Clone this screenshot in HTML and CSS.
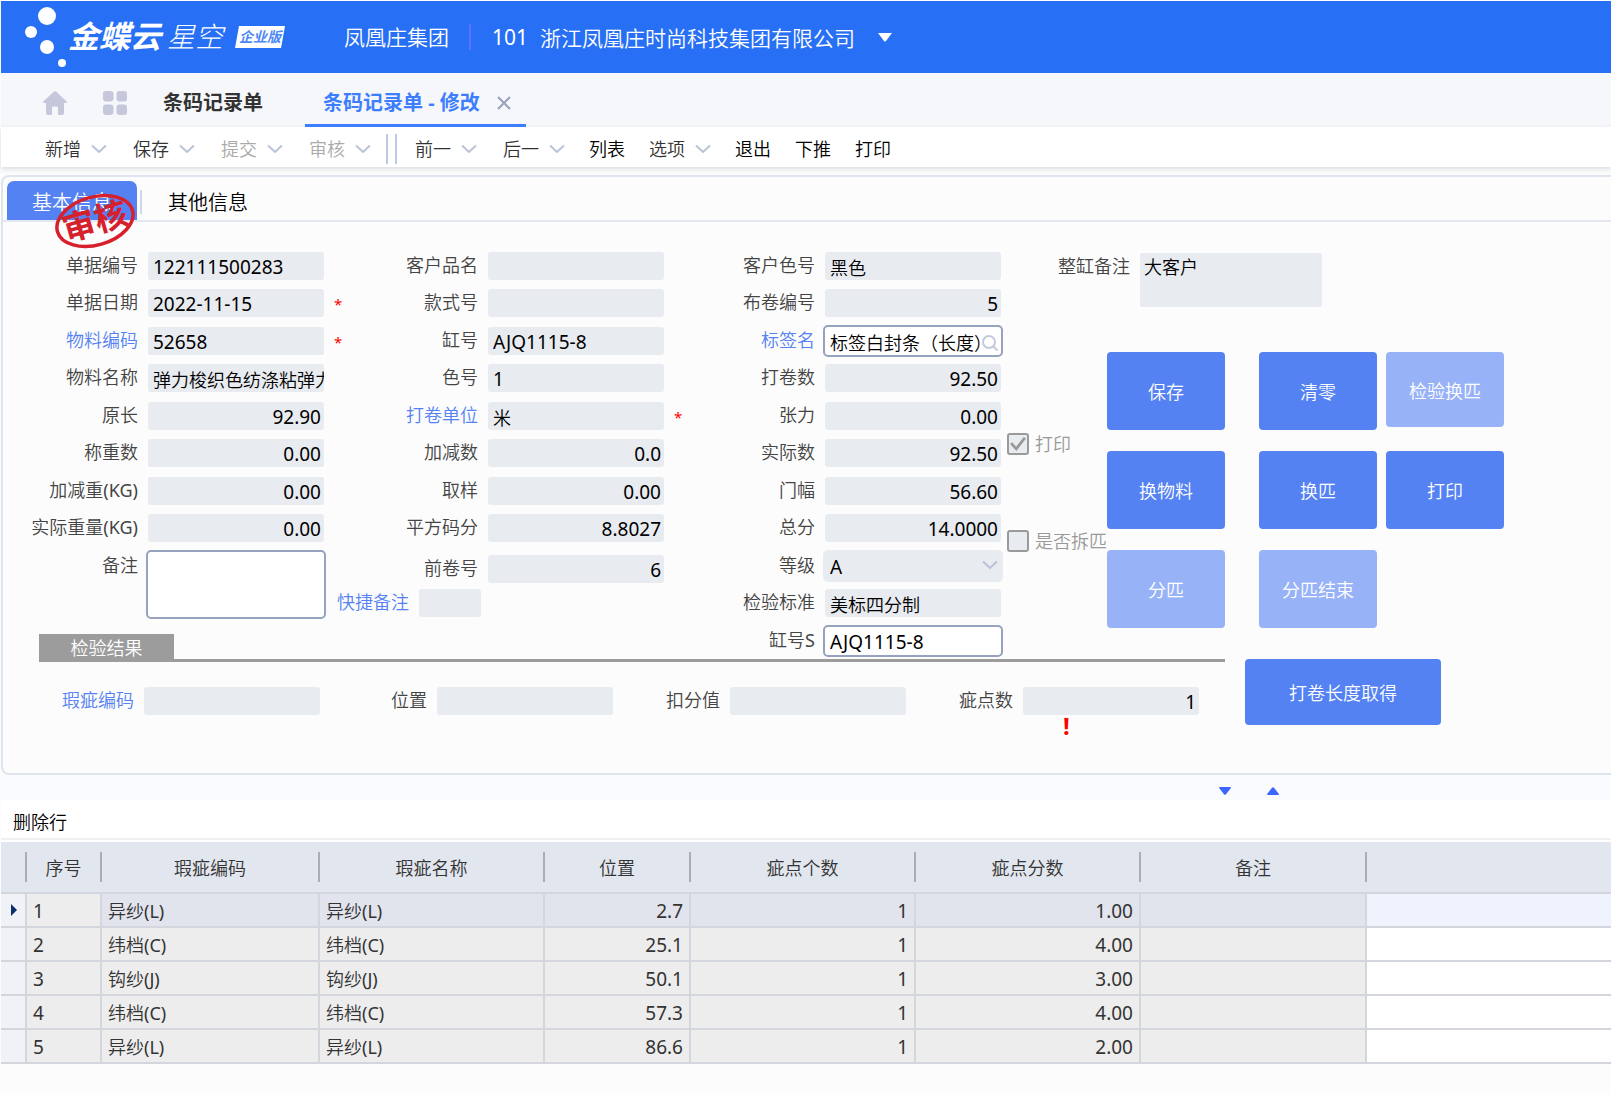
FILE: index.html
```html
<!DOCTYPE html>
<html lang="zh-CN">
<head>
<meta charset="utf-8">
<meta name="viewport" content="width=device-width, initial-scale=1">
<title>条码记录单 - 修改</title>
<link rel="stylesheet" href="styles.css">
</head>
<body>
<svg class="defs" aria-hidden="true">
  <symbol id="chevron" viewBox="0 0 16 10"><path d="M1 1.5 L8 8 L15 1.5" fill="none" stroke="#b9c2d6" stroke-width="2"/></symbol>
</svg>

<header class="topbar">
  <div class="logo">
    <svg class="logo-mark" viewBox="0 0 44 64" aria-hidden="true">
      <circle cx="23" cy="11" r="9"/><circle cx="7" cy="27" r="6"/><circle cx="23" cy="42" r="7"/><circle cx="38" cy="58" r="4"/>
    </svg>
    <span class="logo-name">金蝶云</span>
    <span class="logo-sub">星空</span>
    <span class="logo-badge">企业版</span>
  </div>
  <span class="org-group">凤凰庄集团</span>
  <button class="org-switch" type="button">
    <span class="org-code">101</span><span>浙江凤凰庄时尚科技集团有限公司</span>
    <svg width="14" height="9" viewBox="0 0 14 9" aria-hidden="true"><path d="M0 0H14L8 8Q7 9 6 8Z" fill="#fff"/></svg>
  </button>
</header>

<nav class="pagetabs">
  <button class="icon-btn" type="button" aria-label="首页"><svg width="24" height="24" viewBox="0 0 24 24"><path d="M11 .6Q12 -.2 13 .6L23.5 10.2Q24.4 12 22.6 12H21V22Q21 24 19 24H15V17Q15 15.5 13.500 15.500H10.500Q9 15.500 9 17V24H5Q3 24 3 22V12H1.400Q-.4 12 .5 10.200Z"/></svg></button>
  <button class="icon-btn" type="button" aria-label="应用"><svg width="24" height="24" viewBox="0 0 24 24"><rect width="10.500" height="10.500" rx="3"/><rect x="13.500" width="10.500" height="10.500" rx="3"/><rect y="13.500" width="10.500" height="10.500" rx="3"/><rect x="13.500" y="13.500" width="10.500" height="10.500" rx="3"/></svg></button>
  <a class="pagetab" href="#list">条码记录单</a>
  <div class="pagetab pagetab-active">
    <a href="#edit">条码记录单 - 修改</a>
    <button class="close" type="button" aria-label="关闭"><svg width="14" height="14" viewBox="0 0 14 14"><path d="M1 1L13 13M13 1L1 13" stroke="#9aa5bd" stroke-width="2.200" fill="none"/></svg></button>
  </div>
</nav>

<div class="toolbar">
  <div class="tool-group wide">
    <button class="tool" type="button">新增<svg><use href="#chevron"/></svg></button>
    <button class="tool" type="button">保存<svg><use href="#chevron"/></svg></button>
    <button class="tool" type="button" disabled>提交<svg><use href="#chevron"/></svg></button>
    <button class="tool" type="button" disabled>审核<svg><use href="#chevron"/></svg></button>
  </div>
  <span class="tool-sep"></span>
  <div class="tool-group wide">
    <button class="tool" type="button">前一<svg><use href="#chevron"/></svg></button>
    <button class="tool" type="button">后一<svg><use href="#chevron"/></svg></button>
  </div>
  <div class="tool-group">
    <button class="tool strong" type="button">列表</button>
    <button class="tool" type="button">选项<svg><use href="#chevron"/></svg></button>
    <button class="tool strong" type="button">退出</button>
    <button class="tool strong" type="button">下推</button>
    <button class="tool strong" type="button">打印</button>
  </div>
</div>

<main class="panel">
  <div class="formtabs">
    <button class="formtab formtab-active" type="button">基本信息</button>
    <span class="formtab-sep"></span>
    <button class="formtab" type="button">其他信息</button>
    <svg class="stamp" viewBox="0 0 84 60" role="img" aria-label="审核">
      <g transform="rotate(-16 42 30)" fill="#d6202c">
        <ellipse cx="42" cy="30" rx="39" ry="24" fill="none" stroke="#d6202c" stroke-width="3.500"/>
        <text x="42" y="42" text-anchor="middle" class="stamp-text">审核</text>
      </g>
    </svg>
  </div>

  <form class="form">
    <div class="upper">
      <div class="col col-a">
        <div class="field"><label for="a1">单据编号</label><input id="a1" value="122111500283" readonly></div>
        <div class="field"><label for="a2">单据日期</label><input id="a2" value="2022-11-15" readonly><span class="req">*</span></div>
        <div class="field link"><label for="a3">物料编码</label><input id="a3" value="52658" readonly><span class="req">*</span></div>
        <div class="field"><label for="a4">物料名称</label><input id="a4" class="zh" value="弹力梭织色纺涤粘弹力" readonly></div>
        <div class="field"><label for="a5">原长</label><input id="a5" class="num" value="92.90" readonly></div>
        <div class="field"><label for="a6">称重数</label><input id="a6" class="num" value="0.00" readonly></div>
        <div class="field"><label for="a7">加减重<span class="lat">(KG)</span></label><input id="a7" class="num" value="0.00" readonly></div>
        <div class="field"><label for="a8">实际重量<span class="lat">(KG)</span></label><input id="a8" class="num" value="0.00" readonly></div>
        <div class="field memo"><label for="a9">备注</label><textarea id="a9" class="editable"></textarea></div>
        <h2 class="section-title">检验结果</h2>
      </div>

      <div class="col col-b">
        <div class="field"><label for="b1">客户品名</label><input id="b1" readonly></div>
        <div class="field"><label for="b2">款式号</label><input id="b2" readonly></div>
        <div class="field"><label for="b3">缸号</label><input id="b3" value="AJQ1115-8" readonly></div>
        <div class="field"><label for="b4">色号</label><input id="b4" value="1" readonly></div>
        <div class="field link"><label for="b5">打卷单位</label><input id="b5" class="zh" value="米" readonly><span class="req">*</span></div>
        <div class="field"><label for="b6">加减数</label><input id="b6" class="num" value="0.0" readonly></div>
        <div class="field"><label for="b7">取样</label><input id="b7" class="num" value="0.00" readonly></div>
        <div class="field"><label for="b8">平方码分</label><input id="b8" class="num" value="8.8027" readonly></div>
        <div class="field last-roll"><label for="b9">前卷号</label><input id="b9" class="num" value="6" readonly></div>
        <div class="quick link"><label for="b10">快捷备注</label><input id="b10" readonly></div>
      </div>

      <div class="col col-c">
        <div class="field"><label for="c1">客户色号</label><input id="c1" class="zh" value="黑色" readonly></div>
        <div class="field"><label for="c2">布卷编号</label><input id="c2" class="num" value="5" readonly></div>
        <div class="field link"><label for="c3">标签名</label><div class="lookup"><input id="c3" class="zh editable" value="标签白封条（长度）"><svg width="16" height="16" viewBox="0 0 16 16" aria-hidden="true"><circle cx="7" cy="7" r="6" fill="none" stroke="#c3c9dc" stroke-width="2"/><path d="M11.500 11.500L15.500 15.500" stroke="#c3c9dc" stroke-width="2"/></svg></div></div>
        <div class="field"><label for="c4">打卷数</label><input id="c4" class="num" value="92.50" readonly></div>
        <div class="field"><label for="c5">张力</label><input id="c5" class="num" value="0.00" readonly></div>
        <div class="field"><label for="c6">实际数</label><input id="c6" class="num" value="92.50" readonly></div>
        <div class="field"><label for="c7">门幅</label><input id="c7" class="num" value="56.60" readonly></div>
        <div class="field"><label for="c8">总分</label><input id="c8" class="num" value="14.0000" readonly></div>
        <div class="field"><label for="c9">等级</label><div class="lookup"><select id="c9" disabled><option>A</option></select><svg width="16" height="10" aria-hidden="true"><use href="#chevron"/></svg></div></div>
        <div class="field"><label for="c10">检验标准</label><input id="c10" class="zh" value="美标四分制" readonly></div>
        <div class="field"><label for="c11">缸号<span class="lat">S</span></label><input id="c11" class="editable" value="AJQ1115-8"></div>
      </div>

      <div class="side">
        <div class="vat-note"><label for="d1">整缸备注</label><textarea id="d1" class="zh" readonly>大客户</textarea></div>
        <div class="side-row">
          <div class="checks">
            <label class="check"><input type="checkbox" checked disabled>打印</label>
            <label class="check"><input type="checkbox" disabled>是否拆匹</label>
          </div>
          <div class="actions">
            <button class="action" type="button">保存</button>
            <button class="action" type="button">清零</button>
            <button class="action action-short" type="button" disabled>检验换匹</button>
            <button class="action" type="button">换物料</button>
            <button class="action" type="button">换匹</button>
            <button class="action" type="button">打印</button>
            <button class="action" type="button" disabled>分匹</button>
            <button class="action" type="button" disabled>分匹结束</button>
          </div>
        </div>
      </div>
    </div>

    <div class="lower">
      <div class="results">
        <div class="result link"><label for="r1">瑕疵编码</label><input id="r1" readonly></div>
        <div class="result"><label for="r2">位置</label><input id="r2" readonly></div>
        <div class="result"><label for="r3">扣分值</label><input id="r3" readonly></div>
        <div class="result"><label for="r4">疵点数</label><input id="r4" class="num" value="1" readonly><span class="warn">!</span></div>
      </div>
      <button class="action action-wide" type="button">打卷长度取得</button>
    </div>
  </form>
</main>

<div class="splitter">
  <button type="button" aria-label="向下"><svg width="12" height="8" viewBox="0 0 12 8"><path d="M1 0H11Q12.500 0 11.500 1.500L7 7.200Q6 8.200 5 7.200L.5 1.500Q-.5 0 1 0Z"/></svg></button>
  <button type="button" aria-label="向上"><svg width="12" height="8" viewBox="0 0 12 8"><path d="M1 8H11Q12.500 8 11.500 6.500L7 .8Q6 -.2 5 .8L.5 6.500Q-.5 8 1 8Z"/></svg></button>
</div>

<section class="entries">
  <div class="entrybar"><button type="button">删除行</button></div>
  <table class="grid">
    <colgroup><col class="w-mark"><col class="w-seq"><col class="w-code"><col class="w-std"><col class="w-pos"><col class="w-std"><col class="w-std"><col class="w-note"><col></colgroup>
    <thead>
      <tr><th></th><th>序号</th><th>瑕疵编码</th><th>瑕疵名称</th><th>位置</th><th>疵点个数</th><th>疵点分数</th><th>备注</th><th></th></tr>
    </thead>
    <tbody>
      <tr class="selected"><td><svg width="6" height="12" viewBox="0 0 6 12" aria-hidden="true"><path d="M0 0L6 6L0 12Z" fill="#0b2f6b"/></svg></td><td class="n">1</td><td>异纱<span class="lat">(L)</span></td><td>异纱<span class="lat">(L)</span></td><td class="n r">2.7</td><td class="n r">1</td><td class="n r">1.00</td><td></td><td></td></tr>
      <tr><td></td><td class="n">2</td><td>纬档<span class="lat">(C)</span></td><td>纬档<span class="lat">(C)</span></td><td class="n r">25.1</td><td class="n r">1</td><td class="n r">4.00</td><td></td><td></td></tr>
      <tr><td></td><td class="n">3</td><td>钩纱<span class="lat">(J)</span></td><td>钩纱<span class="lat">(J)</span></td><td class="n r">50.1</td><td class="n r">1</td><td class="n r">3.00</td><td></td><td></td></tr>
      <tr><td></td><td class="n">4</td><td>纬档<span class="lat">(C)</span></td><td>纬档<span class="lat">(C)</span></td><td class="n r">57.3</td><td class="n r">1</td><td class="n r">4.00</td><td></td><td></td></tr>
      <tr><td></td><td class="n">5</td><td>异纱<span class="lat">(L)</span></td><td>异纱<span class="lat">(L)</span></td><td class="n r">86.6</td><td class="n r">1</td><td class="n r">2.00</td><td></td><td></td></tr>
    </tbody>
  </table>
</section>
</body>
</html>
```
FILE: styles.css
```css
* { box-sizing: border-box; }

body {
  margin: 0;
  padding: 1px 0 0 1px;
  min-height: 100vh;
  background: #fcfcfc;
  color: #444;
  font-family: "Noto Sans", "Noto Sans CJK SC", sans-serif;
  font-size: 18px;
  font-weight: 350;
  overflow-x: hidden;
}

button, input, select, textarea { font: inherit; color: inherit; }
button { padding: 0; border: 0; background: none; cursor: pointer; }
a { color: inherit; text-decoration: none; }
svg { display: block; flex: none; }
.defs { position: absolute; width: 0; height: 0; }
.lat { font-weight: 400; }

/* Top bar */
.topbar {
  display: flex;
  align-items: center;
  height: 72px;
  background: #276ff5;
  color: #fff;
  font-size: 21px;
  white-space: nowrap;
}
.logo { display: flex; align-items: center; width: 320px; margin-left: 23px; }
.logo-mark { width: 44px; height: 64px; fill: #fff; }
.logo-name { font-size: 31px; font-weight: 700; font-style: italic; line-height: 72px; padding-bottom: 3px; }
.logo-sub { margin-left: 6px; padding-bottom: 3px; font-size: 28px; font-weight: 300; font-style: italic; line-height: 72px; }
.logo-badge {
  width: 50px;
  margin-left: 12px;
  background: #fff;
  clip-path: polygon(8% 0, 100% 0, 92% 100%, 0 100%);
  color: #4d88f7;
  font-size: 14px;
  font-weight: 700;
  font-style: italic;
  line-height: 22px;
  text-align: center;
}
.org-group { padding-right: 20px; border-right: 2px solid #5f70fa; line-height: 26px; }
.org-switch { display: flex; align-items: center; gap: 12px; margin-left: 21px; }
.org-switch svg { margin-left: 11px; }
.org-code { font-weight: 400; }

/* Page tabs */
.pagetabs {
  display: flex;
  align-items: center;
  height: 54px;
  padding-left: 42px;
  background: #f6f7fb;
  font-size: 20px;
  font-weight: 700;
  white-space: nowrap;
}
.icon-btn { margin-right: 36px; padding-top: 6px; fill: #c5c8da; }
.pagetab { height: 54px; padding-top: 6px; color: #333; line-height: 48px; }
.pagetab-active {
  display: flex;
  align-items: center;
  justify-content: space-between;
  width: 221px;
  margin-left: 42px;
  padding: 9px 15px 0 18px;
  border-bottom: 3px solid #3d7eff;
  color: #3d7eff;
  line-height: 42px;
}

/* Toolbar */
.toolbar {
  display: flex;
  align-items: center;
  gap: 24px;
  height: 40px;
  padding: 3px 0 0 44px;
  background: #fff;
  box-shadow: 0 2px 5px rgba(60, 70, 90, .18);
  white-space: nowrap;
}
.tool-group { display: flex; gap: 24px; }
.tool-group.wide { gap: 26px; }
.tool { display: flex; align-items: center; gap: 10px; color: #333; line-height: 34px; }
.tool svg { width: 16px; height: 10px; }
.tool:disabled { color: #aaa; }
.tool.strong { color: #000; }
.tool-sep {
  width: 11px;
  height: 30px;
  margin: 0 -6px 0 -9px;
  border: solid #bccbe2;
  border-width: 0 2px;
}

/* Form panel */
.panel {
  margin-top: 8px;
  border: 2px solid #dfe5ee;
  border-right: 0;
  border-radius: 8px 0 0 8px;
  background: #fcfcfc;
}
.formtabs {
  position: relative;
  display: flex;
  height: 45px;
  padding: 4px 0 0 4px;
  border-bottom: 2px solid #e3e8f0;
  font-size: 20px;
}
.formtab { width: 130px; height: 39px; padding: 2px 0 0; color: #000; }
.formtab-active { border-radius: 7px 7px 0 0; background: #5582f3; color: #fff; }
.formtab-sep { width: 2px; height: 24px; margin: 9px 1px 0 3px; background: #d0d8e8; }
.stamp { position: absolute; left: 50px; top: 14px; width: 84px; height: 60px; }
.stamp-text { font-size: 33px; font-weight: 700; }

.form { padding: 28px 0 38px; }
.upper { display: flex; }
.col {
  flex: none;
  display: grid;
  grid-template-rows: repeat(5, 37px 38px) 34px;
  align-items: start;
}
.col-a { width: 340px; margin-left: 21px; }
.col-b { width: 337px; }
.col-c { width: 302px; }
.field { display: flex; gap: 8px; }
.field > label { width: 114px; text-align: right; }
label { flex: none; line-height: 30px; white-space: nowrap; }
.link > label { color: #5582f3; }

input:not([type]), select, textarea {
  display: block;
  width: 180px;
  height: 32px;
  margin: 0;
  padding: 2px 0 0 5px;
  border: 2px solid transparent;
  border-radius: 5px;
  outline: 0;
  background: #e8ebf0;
  background-clip: padding-box;
  color: #000;
  font-size: 19px;
  font-weight: 400;
  line-height: 26px;
  resize: none;
}
input.num:not([type]) { padding: 2px 3px 0 0; text-align: right; }
input.zh:not([type]), textarea.zh { font-size: 18px; font-weight: 350; }
input.editable:not([type]), textarea.editable { border-color: #97a3bd; background-color: #fff; }
select { appearance: none; background-clip: border-box; opacity: 1; }
.req { color: #f00; padding-top: 7px; font-size: 15px; font-weight: 400; line-height: 20px; }

.memo { grid-row: 9 / 11; }
.memo textarea { height: 69px; }
.section-title {
  grid-row: 11;
  align-self: end;
  width: 135px;
  height: 25px;
  margin: 0 0 0 15px;
  background: #9c9c9c;
  color: #fff;
  font-size: 18px;
  font-weight: 350;
  line-height: 28px;
  text-align: center;
}
.last-roll { align-self: center; }
.quick { display: flex; justify-content: flex-end; gap: 8px; width: 119px; }
.quick input:not([type]) { flex: none; width: 66px; }

.lookup { position: relative; }
.lookup svg { position: absolute; right: 5px; top: 10px; }
.lookup input:not([type]) { padding-right: 20px; }

.side { margin-left: 4px; }
.vat-note { display: flex; gap: 8px; height: 102px; padding: 1px 0 0 51px; }
.vat-note textarea { width: 186px; height: 58px; padding: 1px 0 0 4px; }
.side-row { display: flex; }
.checks { width: 100px; padding-top: 78px; }
.check { display: flex; align-items: center; gap: 6px; height: 28px; margin-bottom: 69px; color: #999; }
.check input {
  appearance: none;
  display: grid;
  place-items: center;
  width: 22px;
  height: 22px;
  margin: 0;
  border: 2px solid #9a9a9a;
  border-radius: 3px;
  background: #e8ebf0;
}
.check input:checked::before {
  content: "";
  width: 16px;
  height: 14px;
  background: #999;
  clip-path: polygon(0 50%, 14% 38%, 38% 70%, 86% 0, 100% 10%, 40% 100%);
}

.actions {
  display: grid;
  grid-template-columns: 152px 127px 118px;
  gap: 21px 0;
}
.action {
  width: 118px;
  height: 78px;
  border-radius: 4px;
  background: #5582f3;
  color: #fff;
}
.action:disabled { background: #98b2f8; color: #fff; }
.action-short { height: 75px; }
.action-wide { width: 196px; height: 66px; }

.lower { display: flex; gap: 20px; margin-left: 36px; }
.results {
  display: grid;
  grid-template-columns: repeat(4, 293px);
  align-content: start;
  width: 1186px;
  padding-top: 23px;
  border-top: 3px solid #9c9c9c;
}
.result { display: grid; grid-template-columns: 95px 180px; column-gap: 8px; text-align: right; }
.warn { grid-column: 2; padding-left: 42px; color: #f00; font-size: 24px; font-weight: 700; line-height: 18px; text-align: left; }

/* Splitter */
.splitter {
  display: flex;
  gap: 36px;
  height: 25px;
  padding: 12px 0 0 1218px;
  background: #fafbff;
  fill: #3d66ff;
}
.splitter button { height: 8px; }

/* Entry table */
.entrybar { height: 42px; padding: 6px 0 0 12px; border-bottom: 2px solid #fff; background: #fff; box-shadow: inset 0 -2px #f0f0f0; }
.entrybar button { color: #000; line-height: 32px; }
.grid { width: 100%; border-spacing: 0; table-layout: fixed; color: #333; white-space: nowrap; }
.w-mark { width: 26px; }
.w-seq { width: 75px; }
.w-code { width: 218px; }
.w-std { width: 225px; }
.w-pos { width: 146px; }
.w-note { width: 226px; }
.grid th {
  height: 52px;
  padding: 0 2px 0 0;
  border-bottom: 2px solid #d3d7dd;
  background: linear-gradient(#a9adb6, #a9adb6) right 0 top 10px / 2px 30px no-repeat #e2e6ee;
  font-weight: 350;
}
.grid th:last-child { background-image: none; }
.grid td {
  height: 34px;
  padding: 2px 6px 0;
  border: solid #d3d7dd;
  border-width: 0 2px 2px 0;
  background: #ededed;
  line-height: 30px;
}
.grid td.n { font-size: 19px; font-weight: 400; }
.grid td.r { text-align: right; }
.grid td:first-child { padding: 0 0 0 10px; background: #f1f2f7; }
.grid td:last-child { border-right: 0; background: #fff; }
.grid .selected td:nth-child(n + 3) { background: #e1e4ed; }
.grid .selected td:last-child { background: #eff3fe; }
```
